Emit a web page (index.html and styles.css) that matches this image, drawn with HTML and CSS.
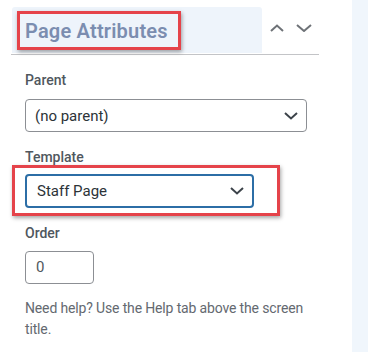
FILE: index.html
```html
<!DOCTYPE html>
<html lang="en">
<head>
  <meta charset="UTF-8">
  <title>Page Attributes</title>
  <meta name="viewport" content="width=device-width, initial-scale=1.0">
  <link rel="stylesheet" href="styles.css">
</head>
<body>
  <div class="screen">
    <!-- meta box -->
    <div class="postbox">
      <div class="postbox-header">
        <h2 class="hndle"><span class="mark mark-title">Page Attributes</span></h2>
        <div class="handle-actions">
          <button class="handle-btn" aria-label="Move up">
            <svg width="14" height="8" viewBox="0 0 14 8"><path d="M1 7 L7 1.5 L13 7" fill="none" stroke="#6e7277" stroke-width="2"/></svg>
          </button>
          <button class="handle-btn" aria-label="Move down">
            <svg width="16" height="8" viewBox="0 0 16 8"><path d="M1 1 L8 7 L15 1" fill="none" stroke="#6e7277" stroke-width="2"/></svg>
          </button>
        </div>
      </div>

      <div class="inside">
        <p class="field-label">Parent</p>
        <div class="select select-wide">
          <span>(no parent)</span>
          <svg width="14" height="8" viewBox="0 0 14 8"><path d="M1 1 L7 6.5 L13 1" fill="none" stroke="#3c434a" stroke-width="2"/></svg>
        </div>

        <p class="field-label">Template</p>
        <div class="mark mark-field">
          <div class="select select-focus">
            <span>Staff Page</span>
            <svg width="14" height="8" viewBox="0 0 14 8"><path d="M1 1 L7 6.5 L13 1" fill="none" stroke="#3c434a" stroke-width="2"/></svg>
          </div>
        </div>

        <p class="field-label label-order">Order</p>
        <div class="order-input">0</div>

        <p class="help">Need help? Use the Help tab above the screen title.</p>
      </div>
    </div>

    <!-- side column -->
    <div class="side"></div>
  </div>
</body>
</html>
```

FILE: styles.css
```css
body { margin: 0; font-family: Roboto, "Liberation Sans", Arial, sans-serif; background: #fff; color: #2c3338; }
.screen { display: flex; height: 352px; }
.postbox { width: 352px; flex: none; }
.side { flex: 1; background: #f0f6fc; }

.postbox-header { display: flex; margin: 7px 0 0 11px; width: 308px; height: 47px; border-bottom: 1px solid #c3c4c7; }
.hndle { margin: 0 0 0 1px; width: 250px; height: 46px; background: #eef4fb; border-radius: 3px 3px 0 0; padding: 4px 0 0 5px; box-sizing: border-box; }
.mark { border: 3px solid #e5434a; box-shadow: 1px 2px 4px rgba(0, 0, 0, 0.35); }
.mark-title { display: inline-block; height: 33px; padding: 0 10px 0 5px; font-size: 20px; font-weight: 600; line-height: 34px; color: #7b8db0; letter-spacing: 0.2px; }
.handle-actions { display: flex; align-items: center; gap: 12px; padding: 0 0 6px 8px; }
.handle-btn { border: 0; background: none; padding: 0; display: flex; }

.inside { padding: 15px 0 0 25px; width: 282px; }
.field-label { margin: 0; font-size: 14px; line-height: 20px; font-weight: 500; color: #50575e; }

.select { display: flex; align-items: center; justify-content: space-between; box-sizing: border-box; border: 1px solid #8c8f94; border-radius: 4px; font-size: 15px; color: #2c3338; }
.select-wide { height: 33px; margin: 9px 0 15px; padding: 0 8px 0 9px; }
.select-focus { width: 229px; height: 34px; padding: 0 8px 0 10px; border: 2px solid #2c6ea6; }

.mark-field { width: 252px; margin: -2px 0 0 -13px; padding: 6px 0 5px 10px; }
.label-order { margin-top: 7px; }

.order-input { width: 69px; height: 33px; margin-top: 8px; box-sizing: border-box; border: 1px solid #8c8f94; border-radius: 4px; padding-left: 10px; font-size: 15px; line-height: 31px; color: #50575e; }

.help { margin: 14px 0 0; width: 292px; font-size: 14px; line-height: 21px; letter-spacing: -0.15px; color: #646970; }
```
